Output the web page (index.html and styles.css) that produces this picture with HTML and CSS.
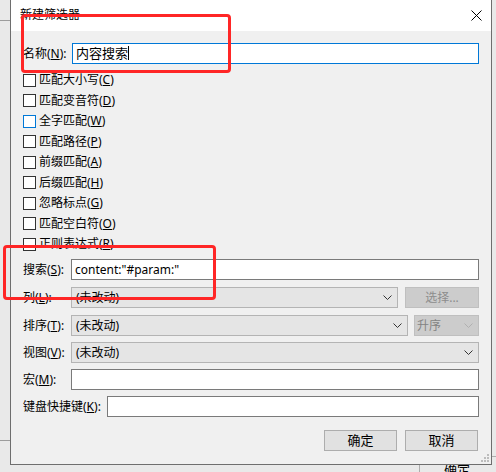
FILE: index.html
```html
<!DOCTYPE html>
<html>
<head>
    <title>新建筛选器</title>
    <link rel="stylesheet" href="styles.css">
</head>
<body>

<div class="screen">
    <div class="desk-line line-top"></div>
    <div class="desk-line line-bottom"></div>

    <div class="window">
        <div class="titlebar">
            <span class="title">新建筛选器</span>
            <svg class="close" width="11" height="11" viewBox="0 0 11 11">
                <path d="M0.5 0.5 L10.5 10.5 M10.5 0.5 L0.5 10.5" stroke="#000" stroke-width="1" fill="none"/>
            </svg>
        </div>

        <div class="content">
            <div class="row row-name">
                <span class="label label-name">名称(<u>N</u>):</span>
                <div class="field focused">内容搜索<span class="caret"></span></div>
            </div>

            <div class="checks">
                <div class="check"><span class="box"></span>匹配大小写(<u>C</u>)</div>
                <div class="check"><span class="box"></span>匹配变音符(<u>D</u>)</div>
                <div class="check"><span class="box hover"></span>全字匹配(<u>W</u>)</div>
                <div class="check"><span class="box"></span>匹配路径(<u>P</u>)</div>
                <div class="check"><span class="box"></span>前缀匹配(<u>A</u>)</div>
                <div class="check"><span class="box"></span>后缀匹配(<u>H</u>)</div>
                <div class="check"><span class="box"></span>忽略标点(<u>G</u>)</div>
                <div class="check"><span class="box"></span>匹配空白符(<u>O</u>)</div>
                <div class="check"><span class="box"></span>正则表达式(<u>R</u>)</div>
            </div>

            <div class="row row-search">
                <span class="label">搜索(<u>S</u>):</span>
                <div class="field">content:"#param:"</div>
            </div>

            <div class="row row-col">
                <span class="label">列(<u>L</u>):</span>
                <div class="combo combo-col">(未改动)
                    <svg class="chev" width="9" height="5" viewBox="0 0 9 5"><path d="M0.5 0.5 L4.5 4.5 L8.5 0.5" stroke="#333" fill="none"/></svg>
                </div>
                <div class="btn-disabled btn-pick">选择...</div>
            </div>

            <div class="row row-sort">
                <span class="label">排序(<u>T</u>):</span>
                <div class="combo combo-sort">(未改动)
                    <svg class="chev" width="9" height="5" viewBox="0 0 9 5"><path d="M0.5 0.5 L4.5 4.5 L8.5 0.5" stroke="#333" fill="none"/></svg>
                </div>
                <div class="combo disabled combo-order">升序
                    <svg class="chev" width="9" height="5" viewBox="0 0 9 5"><path d="M0.5 0.5 L4.5 4.5 L8.5 0.5" stroke="#b0b0b0" fill="none"/></svg>
                </div>
            </div>

            <div class="row row-view">
                <span class="label">视图(<u>V</u>):</span>
                <div class="combo combo-view">(未改动)
                    <svg class="chev" width="9" height="5" viewBox="0 0 9 5"><path d="M0.5 0.5 L4.5 4.5 L8.5 0.5" stroke="#333" fill="none"/></svg>
                </div>
            </div>

            <div class="row row-macro">
                <span class="label">宏(<u>M</u>):</span>
                <div class="field"></div>
            </div>

            <div class="row row-key">
                <span class="label label-key">键盘快捷键(<u>K</u>):</span>
                <div class="field"></div>
            </div>

            <div class="actions">
                <div class="button">确定</div>
                <div class="button">取消</div>
            </div>
        </div>

        <svg class="grip" width="8" height="8" viewBox="0 0 8 8">
            <rect x="6" y="0" width="2" height="2" fill="#bcbcbc"/>
            <rect x="3" y="3" width="2" height="2" fill="#bcbcbc"/>
            <rect x="6" y="3" width="2" height="2" fill="#bcbcbc"/>
            <rect x="0" y="6" width="2" height="2" fill="#bcbcbc"/>
            <rect x="3" y="6" width="2" height="2" fill="#bcbcbc"/>
            <rect x="6" y="6" width="2" height="2" fill="#bcbcbc"/>
        </svg>
    </div>

    <div class="parent-btn">确定</div>

    <div class="mark mark-name"></div>
    <div class="mark mark-search"></div>
</div>

</body>
</html>
```

FILE: styles.css
```css
body {
    margin: 0;
    font-family: "Noto Sans", "Noto Sans CJK SC", sans-serif;
    font-size: 12px;
    color: #000;
}

.screen {
    position: relative;
    width: 496px;
    height: 472px;
    overflow: hidden;
    background: #e9e9e9;
}

.desk-line {
    position: absolute;
    left: 0;
    width: 10px;
    height: 1px;
    background: #9c9c9c;
}

.line-top {
    top: 20px;
}

.line-bottom {
    top: 440px;
}

.window {
    position: relative;
    margin-left: 10px;
    width: 480px;
    height: 464px;
    border: 1px solid #6e6e6e;
    border-top: none;
    background: #f0f0f0;
    z-index: 1;
}

.titlebar {
    height: 31px;
    background: #fff;
    display: flex;
    align-items: center;
    justify-content: space-between;
    padding: 0 9px 0 9px;
    box-sizing: border-box;
}

.title {
    line-height: 16px;
    margin-top: -1px;
}

.close {
    display: block;
    margin-top: -1px;
}

.content {
    padding: 12px 12px 0 12px;
}

.row {
    display: flex;
    align-items: center;
    height: 21px;
}

.label {
    width: 48px;
    flex: none;
    white-space: nowrap;
    line-height: 16px;
}

.label-name {
    width: 49px;
}

.label-key {
    width: 84px;
}

u {
    text-decoration-thickness: 1px;
    text-underline-offset: 1px;
}

.field {
    flex: 1;
    height: 21px;
    box-sizing: border-box;
    border: 1px solid #7a7a7a;
    background: #fff;
    padding: 0 3px;
    line-height: 19px;
    white-space: nowrap;
}

.field.focused {
    border-color: #0078d7;
    font-size: 13px;
}

.caret {
    display: inline-block;
    width: 1px;
    height: 14px;
    background: #000;
    vertical-align: -2px;
}

.checks {
    margin-top: 6px;
}

.check {
    display: flex;
    align-items: center;
    height: 20.5px;
    line-height: 16px;
}

.box {
    width: 13px;
    height: 13px;
    box-sizing: border-box;
    border: 1px solid #333;
    background: #fff;
    margin-right: 3px;
    flex: none;
}

.box.hover {
    border-color: #0078d7;
}

.row-search {
    margin-top: 4.5px;
}

.row-col {
    margin-top: 7px;
}

.row-sort {
    margin-top: 7px;
}

.row-view {
    margin-top: 6px;
}

.row-macro {
    margin-top: 6px;
}

.row-key {
    margin-top: 6px;
}

.combo {
    position: relative;
    height: 21px;
    box-sizing: border-box;
    border: 1px solid #b4b4b4;
    background: #e5e5e5;
    padding: 0 4px;
    line-height: 19px;
    white-space: nowrap;
}

.chev {
    position: absolute;
    right: 5px;
    top: 7px;
}

.combo-col {
    width: 327px;
}

.combo-sort {
    width: 337px;
}

.combo-view {
    flex: 1;
}

.btn-disabled {
    height: 21px;
    box-sizing: border-box;
    border: 1px solid #bfbfbf;
    background: #cccccc;
    color: #8d8d8d;
    text-align: center;
    line-height: 19px;
}

.btn-pick {
    width: 74px;
    margin-left: 7px;
}

.combo.disabled {
    width: 65px;
    margin-left: 6px;
    border-color: #bfbfbf;
    background: #cccccc;
    color: #838383;
    padding: 0 2px;
}

.actions {
    display: flex;
    justify-content: flex-end;
    gap: 8px;
    margin-top: 13px;
    margin-right: 1px;
}

.button {
    width: 73px;
    height: 21px;
    box-sizing: border-box;
    border: 1px solid #adadad;
    background: #e1e1e1;
    text-align: center;
    line-height: 19px;
    font-size: 13px;
}

.grip {
    position: absolute;
    right: 2px;
    bottom: 2px;
}

.parent-btn {
    position: absolute;
    left: 419px;
    top: 456px;
    width: 90px;
    height: 24px;
    box-sizing: border-box;
    border: 1px solid #adadad;
    background: #e9e9e9;
    padding-left: 24px;
    line-height: 25px;
    font-size: 13px;
}

.mark {
    position: absolute;
    border: 3px solid #ff2626;
    border-radius: 4px;
    z-index: 2;
}

.mark-name {
    left: 21px;
    top: 14px;
    width: 204px;
    height: 53px;
}

.mark-search {
    left: 3px;
    top: 245px;
    width: 207px;
    height: 49px;
}
```
